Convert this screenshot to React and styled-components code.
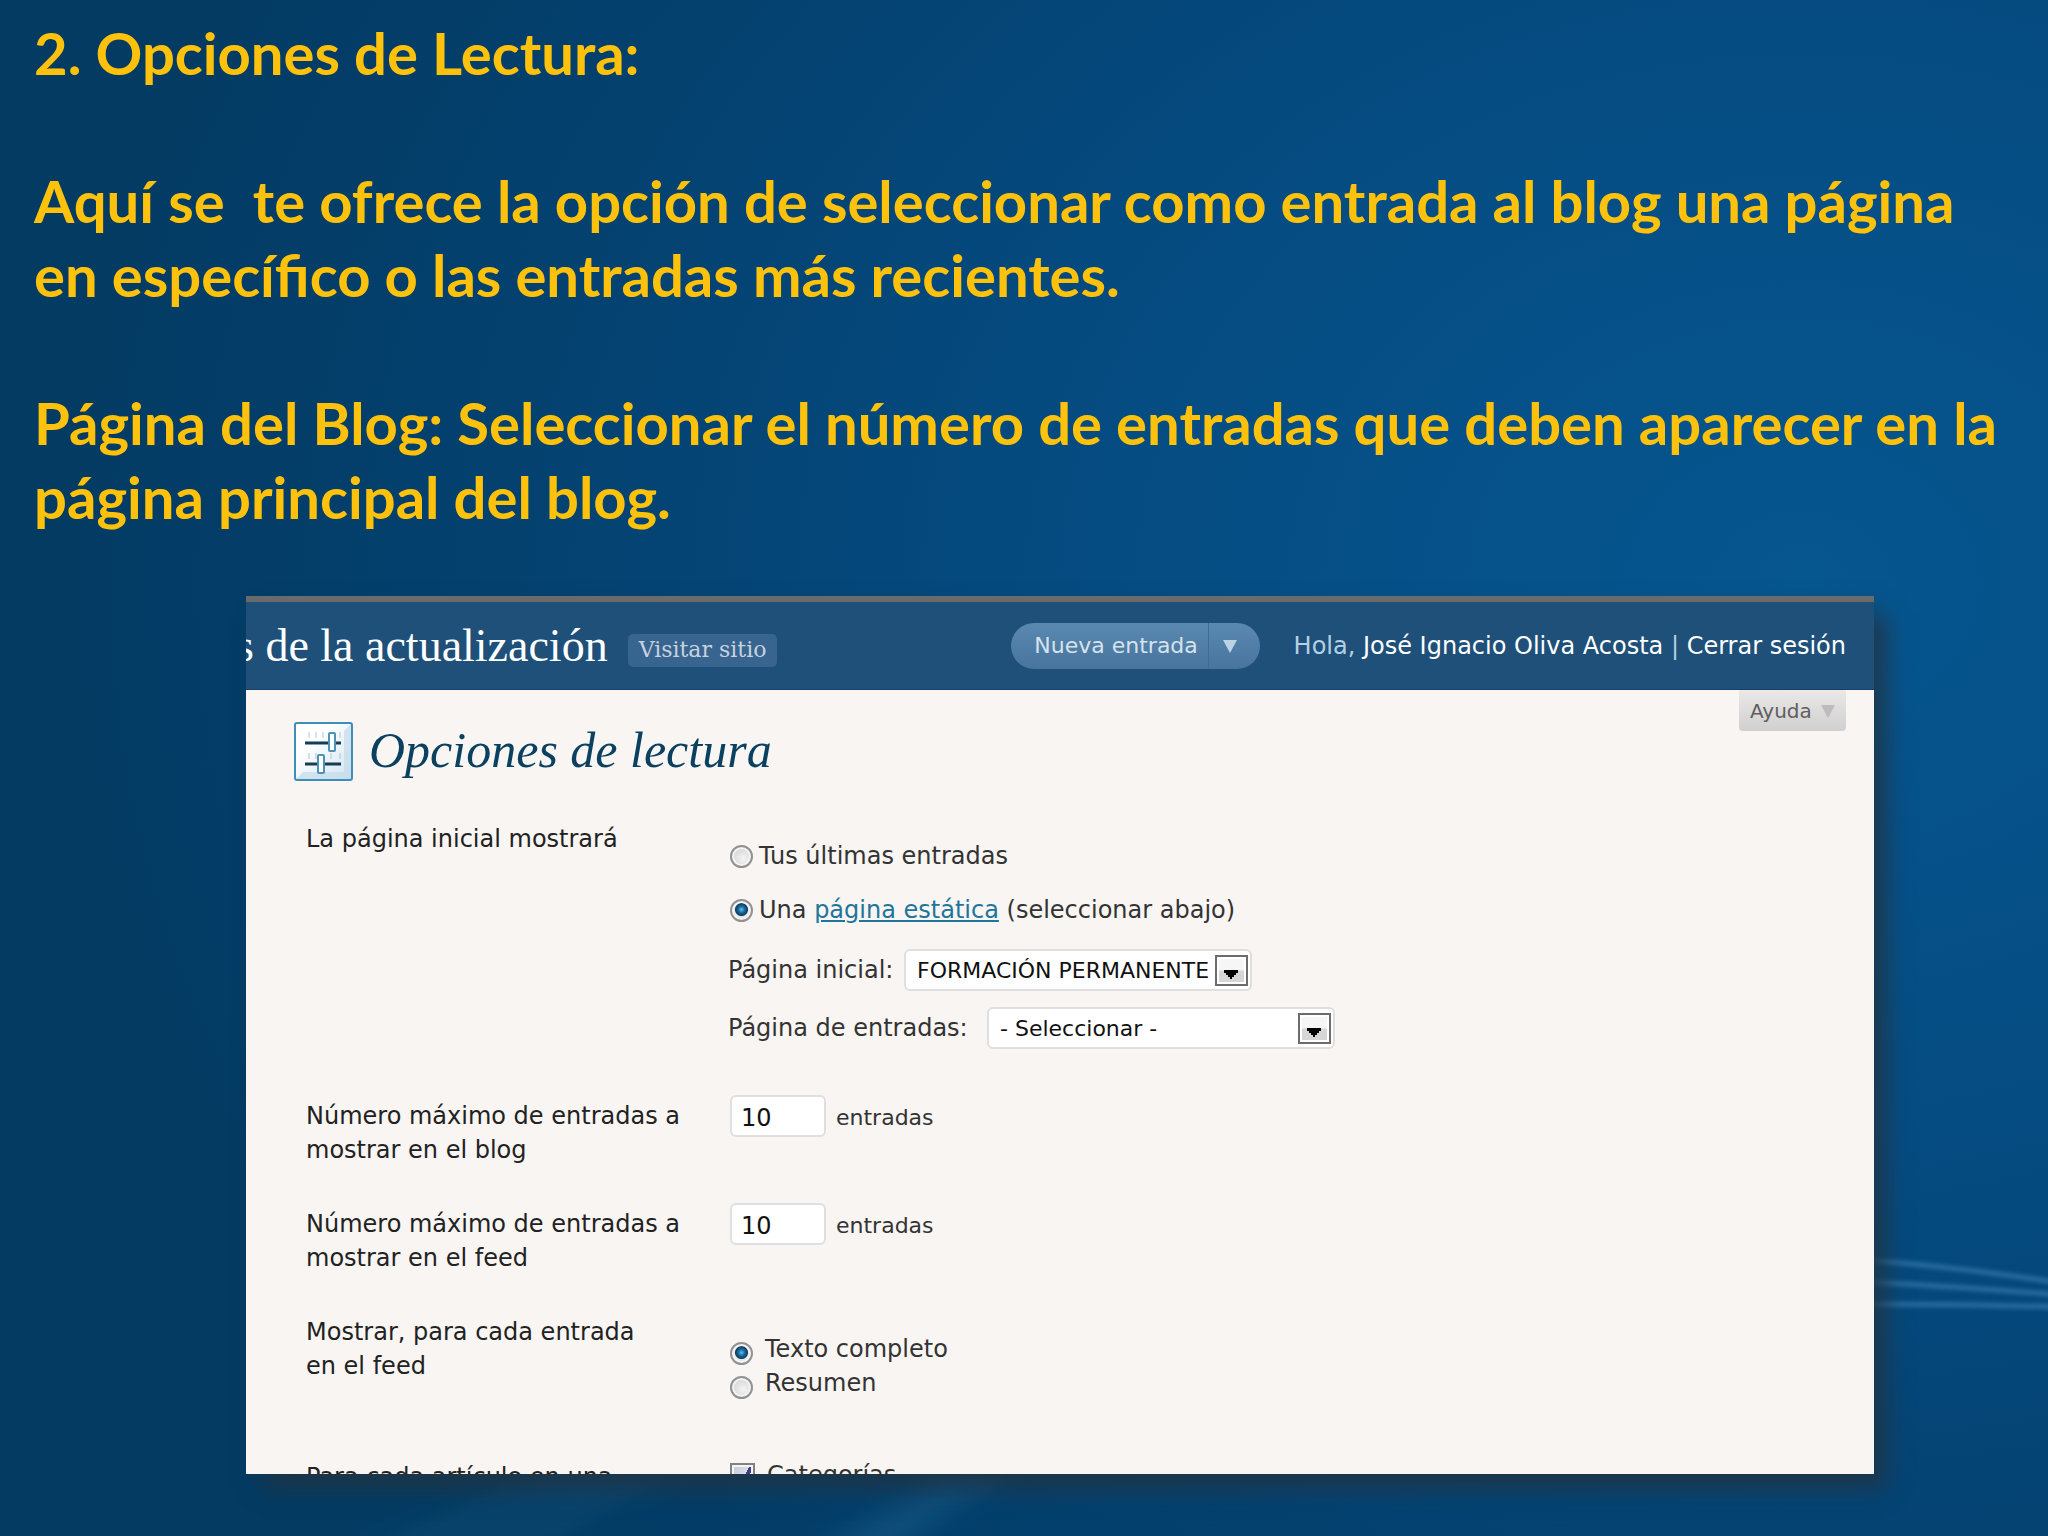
import React from 'react';
import styled, { createGlobalStyle } from 'styled-components';

const ui = `'DejaVu Sans', Verdana, sans-serif`;
const serif = `'Liberation Serif', Georgia, serif`;

const GlobalStyle = createGlobalStyle`
    * { box-sizing: border-box; }

    body {
        margin: 0;
        background: #033b66;
    }
`;

const Slide = styled.main`
    position: relative;
    display: flex;
    flex-direction: column;
    height: 100vh;
    padding-bottom: 62px;
    overflow: hidden;
    background: radial-gradient(ellipse 85% 90% at 88% 38%, #065690 0%, #054c82 40%, #04416f 75%, #033b63 100%);
`;

// curvas de luz del fondo
const Waves = styled.svg`
    position: absolute;
    inset: 0;
    width: 100%;
    height: 100%;
`;

const Intro = styled.section`
    position: relative;
    padding: 16px 0 62px 34px;
    font-family: Lato, sans-serif;
    font-size: 58px;
    font-weight: 700;
    line-height: 74px;
    color: #ffc20c;
    white-space: pre;
`;

const Heading = styled.h1`
    margin: 0;
    font: inherit;
`;

const Paragraph = styled.p`
    margin: 74px 0 0;
`;

const Panel = styled.section`
    position: relative;
    flex: 1;
    min-height: 0;
    margin: 0 174px 0 246px;
    background: #f8f5f2;
    box-shadow: 14px 16px 22px -2px rgba(34, 52, 66, 0.85);
`;

// el contenido se corta en el borde del panel
const Clip = styled.div`
    height: 100%;
    overflow: hidden;
    font-family: ${ui};
    font-size: 24px;
    line-height: 34px;
    color: #333;
`;

const Header = styled.header`
    display: flex;
    align-items: center;
    height: 94px;
    padding-right: 28px;
    border-top: 6px solid #6b6b6b;
    border-bottom: 1px solid #18406a;
    background: #1e5079;
`;

const SiteTitle = styled.h2`
    margin: 0 20px 0 -10px;
    font-family: ${serif};
    font-size: 46px;
    font-weight: 400;
    white-space: nowrap;
    color: #fff;
`;

const VisitButton = styled.button`
    height: 33px;
    margin: 9px auto 0 0;
    padding: 0 11px;
    border: 0;
    border-radius: 5px;
    background: #386490;
    font-family: 'DejaVu Serif', Georgia, serif;
    font-size: 22px;
    line-height: 30px;
    white-space: nowrap;
    color: #c5d3df;
`;

const Favorite = styled.div`
    display: flex;
    height: 46px;
    border-radius: 23px;
    overflow: hidden;
    background: linear-gradient(#5a89b0, #48749e);
`;

const FavoriteButton = styled.button`
    display: flex;
    align-items: center;
    justify-content: center;
    width: ${props => props.$width}px;
    padding: ${props => props.$padding || '0'};
    border: 0;
    border-left: ${props => props.$divided ? '1px solid #3f6c95' : '0'};
    background: none;
    font-family: ${ui};
    font-size: 22px;
    white-space: nowrap;
    color: #d5e3ee;
`;

const UserInfo = styled.div`
    margin-left: 34px;
    white-space: nowrap;
    color: #b3d0e6;

    a {
        color: #fff;
        text-decoration: none;
    }
`;

const TitleBar = styled.div`
    display: flex;
    align-items: flex-start;
    padding: 0 28px 0 48px;
`;

const PageTitle = styled.h3`
    flex: 1;
    margin: 30px 0 0 15px;
    font-family: ${serif};
    font-size: 50px;
    font-style: italic;
    font-weight: 400;
    line-height: 60px;
    color: #0b4160;
`;

const OptionsIcon = styled.svg`
    width: 60px;
    height: 60px;
    margin-top: 32px;
`;

const HelpButton = styled.button`
    display: flex;
    align-items: center;
    justify-content: space-between;
    width: 107px;
    height: 41px;
    padding: 0 11px;
    border: 0;
    border-radius: 0 0 4px 4px;
    background: linear-gradient(#ebe8e7, #d0d0d0);
    font-family: ${ui};
    font-size: 20px;
    color: #5f5f5f;
`;

const Form = styled.form`
    padding: 36px 28px 0 60px;
`;

const Row = styled.div`
    display: grid;
    grid-template-columns: 422px 1fr;
    height: ${props => props.$height}px;
`;

const RowLabel = styled.label`
    max-width: 400px;
    padding-top: 4px;
    color: #222;
`;

const Stack = styled.div`
    display: flex;
    flex-direction: column;
    align-items: flex-start;
    gap: ${props => props.$gap || 0}px;
    padding-top: ${props => props.$top || 0}px;
`;

const Option = styled.label`
    display: flex;
    align-items: center;
    gap: ${props => props.$gap}px;
    white-space: pre;

    a { color: #21759b; }
`;

const Radio = styled.input`
    appearance: none;
    width: 23px;
    height: 23px;
    margin: ${props => props.$drop || 0}px 0 0 2px;
    border: 2px solid #929292;
    border-radius: 50%;
    background: radial-gradient(circle at 60% 60%, #f4f4f4, #c9c9c9);
    box-shadow: inset 0 0 0 2px #f4f4f4;

    &:checked {
        background: radial-gradient(circle at 50% 45%, #5cc3ea 0, #1a6fa5 3px, #123a5c 6px, #e8e8e8 7px);
    }
`;

const Check = styled.input`
    appearance: none;
    width: 25px;
    height: 25px;
    margin: 0 0 0 2px;
    border: 2px solid #7e8287;
    background:
        linear-gradient(115deg, transparent 58%, #3b3f8c 58%, #3b3f8c 72%, transparent 72%),
        linear-gradient(135deg, #c3c8d0, #f2f2f4);
    box-shadow: inset 0 0 0 2px #f4f4f4;
`;

const Field = styled.div`
    display: flex;
    align-items: center;
    gap: ${props => props.$gap || 0}px;
    white-space: nowrap;
`;

const FieldLabel = styled.label`
    width: ${props => props.$width}px;
`;

const SelectBox = styled.div`
    display: flex;
    align-items: center;
    width: 348px;
    height: 42px;
    padding-right: 2px;
    border: 2px solid #dfdfdf;
    border-radius: 6px;
    background: #fff;
`;

const Select = styled.select`
    appearance: none;
    flex: 1;
    min-width: 0;
    height: 36px;
    padding: 0 0 0 11px;
    border: 0;
    background: none;
    font-family: ${ui};
    font-size: 22px;
    color: #111;
`;

const TextInput = styled.input`
    width: 96px;
    height: 42px;
    margin-left: 2px;
    padding: 3px 9px 0;
    border: 2px solid #dfdfdf;
    border-radius: 6px;
    background: #fff;
    font-family: ${ui};
    font-size: 24px;
    color: #111;
`;

const Unit = styled.span`
    padding-top: 4px;
    font-size: 22px;
`;

const Triangle = ({ color, size }) => (
    <svg width={size} height={size} viewBox="0 0 14 14" aria-hidden="true">
        <path d="M0 1h14L7 14z" fill={color} />
    </svg>
);

const SelectArrow = () => (
    <svg width="33" height="31" viewBox="0 0 33 31" aria-hidden="true">
        <defs>
            <linearGradient id="arrowFill" x2="0" y2="1">
                <stop offset="0.45" stopColor="#f6f6f6" />
                <stop offset="0.55" stopColor="#d6d6d6" />
            </linearGradient>
        </defs>
        <rect x="1" y="1" width="31" height="29" fill="#fff" stroke="#6c6c6c" strokeWidth="2" />
        <rect x="4" y="4" width="25" height="23" fill="url(#arrowFill)" />
        <path d="M9 15h14v3h-2v2h-2v2h-2v2h-2v-2h-2v-2h-2v-2h-2z" fill="#000" />
    </svg>
);

const SettingsIcon = () => (
    <OptionsIcon viewBox="0 0 60 60" aria-hidden="true">
        <defs>
            <linearGradient id="iconFill" x2="1" y2="1">
                <stop offset="0.3" stopColor="#fff" />
                <stop offset="1" stopColor="#cfe3f0" />
            </linearGradient>
        </defs>
        <rect x="1" y="1" width="57" height="57" rx="2" fill="url(#iconFill)" />
        <path d="M57 2v55H2l7-7h41V9z" fill="#c5dcea" opacity="0.7" />
        <rect x="1" y="1" width="57" height="57" rx="2" fill="none" stroke="#3d8fb8" strokeWidth="2" />
        <path d="M15 10v6M22 10v6M29 10v6M46 10v6M15 31v6M22 31v6M37 31v6M46 31v6" stroke="#b9c4cc" strokeWidth="1" />
        <path d="M11 21h36M11 42h36" stroke="#143c54" strokeWidth="3" />
        <rect x="35" y="11" width="6" height="18" rx="1" fill="#fff" stroke="#4a93b5" strokeWidth="2" />
        <rect x="24" y="33" width="6" height="18" rx="1" fill="#fff" stroke="#4a93b5" strokeWidth="2" />
    </OptionsIcon>
);

const Background = () => (
    <Waves viewBox="0 0 2048 1536" preserveAspectRatio="none" aria-hidden="true">
        <defs>
            <filter id="soft" x="-20%" y="-50%" width="140%" height="200%">
                <feGaussianBlur stdDeviation="2" />
            </filter>
            <filter id="haze" x="-50%" y="-50%" width="200%" height="200%">
                <feGaussianBlur stdDeviation="14" />
            </filter>
        </defs>
        <g fill="none" stroke="#4f93c4" strokeWidth="5" opacity="0.5" filter="url(#soft)">
            <path d="M1800 1256Q1930 1262 2060 1283" />
            <path d="M1800 1279Q1930 1284 2060 1295" />
            <path d="M1800 1305Q1930 1303 2060 1307" />
        </g>
        <g fill="#2f7fae" filter="url(#haze)">
            <path d="M800 1560L980 1460H1020L880 1560z" opacity="0.25" />
            <path d="M340 1560L560 1460H700L520 1560z" opacity="0.1" />
        </g>
    </Waves>
);

const EntriesRow = ({ id, label, height }) => (
    <Row $height={height}>
        <RowLabel htmlFor={id}>{label}</RowLabel>
        <Stack>
            <Field $gap={10}>
                <TextInput id={id} type="text" defaultValue="10" />
                <Unit>entradas</Unit>
            </Field>
        </Stack>
    </Row>
);

const App = () => (
    <Slide>
        <GlobalStyle />
        <Background />
        <Intro>
            <Heading>2. Opciones de Lectura:</Heading>
            <Paragraph>
                Aquí se{'  '}te ofrece la opción de seleccionar como entrada al blog una página<br />
                en específico o las entradas más recientes.
            </Paragraph>
            <Paragraph>
                Página del Blog: Seleccionar el número de entradas que deben aparecer en la<br />
                página principal del blog.
            </Paragraph>
        </Intro>
        <Panel>
            <Clip>
                <Header>
                    <SiteTitle>s de la actualización</SiteTitle>
                    <VisitButton>Visitar sitio</VisitButton>
                    <Favorite>
                        <FavoriteButton $width={197} $padding="0 0 0 14px">Nueva entrada</FavoriteButton>
                        <FavoriteButton $width={52} $padding="0 8px 0 0" $divided aria-label="Más acciones">
                            <Triangle color="#bcd3e5" size={14} />
                        </FavoriteButton>
                    </Favorite>
                    <UserInfo>
                        Hola, <a href="#perfil">José Ignacio Oliva Acosta</a> | <a href="#salir">Cerrar sesión</a>
                    </UserInfo>
                </Header>
                <TitleBar>
                    <SettingsIcon />
                    <PageTitle>Opciones de lectura</PageTitle>
                    <HelpButton>Ayuda <Triangle color="#bdbdbd" size={14} /></HelpButton>
                </TitleBar>
                <Form>
                    <Row $height={277}>
                        <RowLabel as="div">La página inicial mostrará</RowLabel>
                        <Stack $top={21}>
                            <Stack $gap={20}>
                                <Option $gap={6}>
                                    <Radio type="radio" name="front" />
                                    <span>Tus últimas entradas</span>
                                </Option>
                                <Option $gap={6}>
                                    <Radio type="radio" name="front" defaultChecked />
                                    <span>Una <a href="#estatica">página estática</a> (seleccionar abajo)</span>
                                </Option>
                            </Stack>
                            <Stack $gap={16} $top={22}>
                                <Field>
                                    <FieldLabel htmlFor="inicial" $width={176}>Página inicial:</FieldLabel>
                                    <SelectBox>
                                        <Select id="inicial"><option>FORMACIÓN PERMANENTE</option></Select>
                                        <SelectArrow />
                                    </SelectBox>
                                </Field>
                                <Field>
                                    <FieldLabel htmlFor="entradas" $width={259}>Página de entradas:</FieldLabel>
                                    <SelectBox>
                                        <Select id="entradas"><option>- Seleccionar -</option></Select>
                                        <SelectArrow />
                                    </SelectBox>
                                </Field>
                            </Stack>
                        </Stack>
                    </Row>
                    <EntriesRow id="max-blog" height={108} label="Número máximo de entradas a mostrar en el blog" />
                    <EntriesRow id="max-feed" height={108} label="Número máximo de entradas a mostrar en el feed" />
                    <Row $height={145}>
                        <RowLabel as="div">Mostrar, para cada entrada<br />en el feed</RowLabel>
                        <Stack $top={21}>
                            <Option $gap={12}>
                                <Radio type="radio" name="feed" $drop={8} defaultChecked />
                                <span>Texto completo</span>
                            </Option>
                            <Option $gap={12}>
                                <Radio type="radio" name="feed" $drop={8} />
                                <span>Resumen</span>
                            </Option>
                        </Stack>
                    </Row>
                    <Row $height={108}>
                        <RowLabel as="div">Para cada artículo en una</RowLabel>
                        <Stack $top={2}>
                            <Option $gap={12}>
                                <Check type="checkbox" defaultChecked />
                                <span>Categorías</span>
                            </Option>
                        </Stack>
                    </Row>
                </Form>
            </Clip>
        </Panel>
    </Slide>
);

export default App;
